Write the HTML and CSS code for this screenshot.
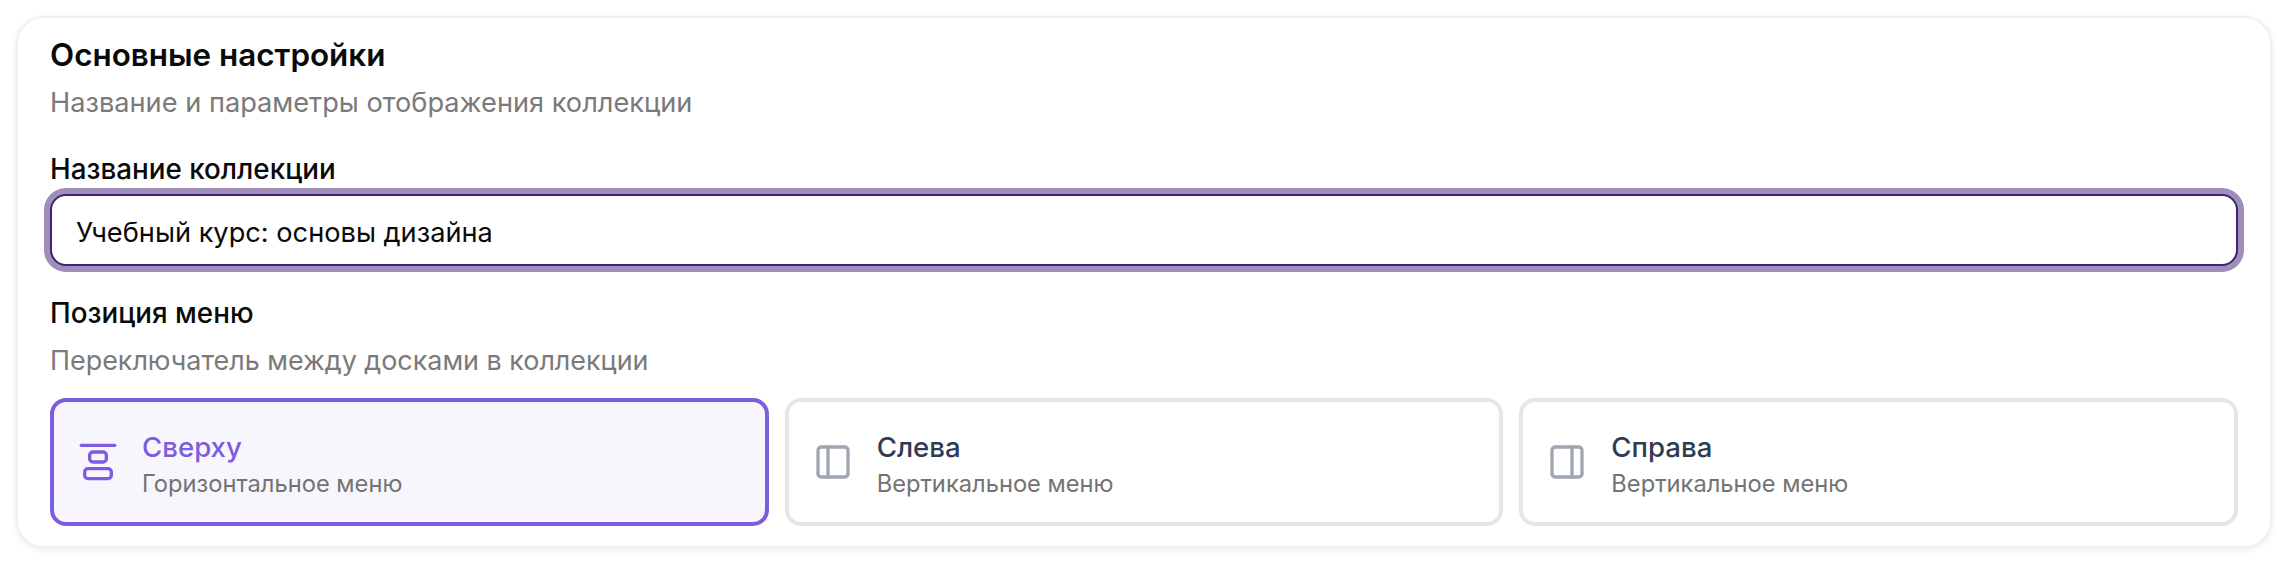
FILE: index.html
```html
<!DOCTYPE html>
<html lang="ru">
<head>
<meta charset="utf-8">
<title>Основные настройки</title>
<link rel="stylesheet" href="styles.css">
</head>
<body>
<section class="card">
  <h2 class="card-title">Основные настройки</h2>
  <p class="card-desc">Название и параметры отображения коллекции</p>
  <label class="field-label" for="name">Название коллекции</label>
  <input class="text-input" id="name" type="text" value="Учебный курс: основы дизайна">
  <div class="field-label menu-label">Позиция меню</div>
  <p class="field-desc">Переключатель между досками в коллекции</p>
  <div class="options">
    <div class="option selected">
      <svg class="icon" viewBox="0 0 24 24"><rect x="4" y="16" width="16" height="6" rx="2"/><rect x="7" y="6" width="10" height="6" rx="2"/><path d="M2 2h20"/></svg>
      <div class="option-text"><div class="option-title">Сверху</div><div class="option-sub">Горизонтальное меню</div></div>
    </div>
    <div class="option">
      <svg class="icon" viewBox="0 0 24 24"><rect x="3" y="3" width="18" height="18" rx="2"/><path d="M9 3v18"/></svg>
      <div class="option-text"><div class="option-title">Слева</div><div class="option-sub">Вертикальное меню</div></div>
    </div>
    <div class="option">
      <svg class="icon" viewBox="0 0 24 24"><rect x="3" y="3" width="18" height="18" rx="2"/><path d="M15 3v18"/></svg>
      <div class="option-text"><div class="option-title">Справа</div><div class="option-sub">Вертикальное меню</div></div>
    </div>
  </div>
</section>
</body>
</html>
```
FILE: styles.css
```css
* { box-sizing: border-box; }
html, body { margin: 0; background: #fff; }
body { padding: 16px; font-family: Inter, "Noto Sans", sans-serif; }
.card {
  border: 2px solid #f0f0f0;
  border-radius: 28px;
  padding: 17px 32px 20px;
  background: #fff;
  box-shadow: 0 2px 6px rgba(0, 0, 0, 0.08);
  height: 532px;
}
.card-title { margin: 0; font-size: 31.4px; line-height: 40px; font-weight: 600; color: #0a0a0a; }
.card-desc { margin: 10px 0 0; font-size: 27.2px; line-height: 36px; color: #7a7a7a; }
.field-label { display: block; margin-top: 32px; font-size: 27.8px; line-height: 32px; font-weight: 500; color: #0a0a0a; }
.text-input {
  display: block;
  width: 100%;
  height: 72px;
  margin-top: 9px;
  padding: 4px 24px 0;
  border: 2px solid #3d2278;
  border-radius: 16px;
  outline: none;
  box-shadow: 0 0 0 6px #a08dba;
  background: #fff;
  font: 400 27.2px Inter, sans-serif;
  color: #0a0a0a;
}
.menu-label { margin-top: 31px; }
.field-desc { margin: 13px 0 0; font-size: 26.9px; line-height: 36px; color: #7a7a7a; }
.options { display: grid; grid-template-columns: repeat(3, 1fr); gap: 16px; margin-top: 20px; }
.option {
  display: flex;
  align-items: center;
  gap: 24px;
  height: 128px;
  padding: 0 24px;
  border: 4px solid #e5e5ea;
  border-radius: 16px;
  background: #fff;
}
.option.selected { border-color: #7b5ddd; background: #f7f6fd; }
.icon { width: 40px; height: 40px; flex: none; fill: none; stroke: #9ea6b3; stroke-width: 2; stroke-linecap: round; stroke-linejoin: round; }
.selected .icon { stroke: #7b5ddd; }
.option-text { padding-top: 5px; }
.option-title { font-size: 27.6px; line-height: 36px; font-weight: 500; color: #2f3b52; }
.selected .option-title { color: #7b5ddd; }
.option-sub { font-size: 23.7px; line-height: 32px; color: #737373; margin-top: 3px; }
```
